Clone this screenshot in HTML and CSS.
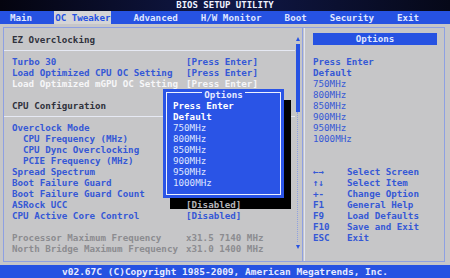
FILE: index.html
```html
<!DOCTYPE html>
<html lang="en">
<head>
    <meta charset="UTF-8">
    <title>BIOS SETUP UTILITY</title>
    <link rel="stylesheet" href="styles.css">
</head>
<body>
    <div class="title-bar">BIOS SETUP UTILITY</div>
    <div class="menu-bar">
        <span class="tab">Main</span>
        <span class="tab active">OC Tweaker</span>
        <span class="tab">Advanced</span>
        <span class="tab">H/W Monitor</span>
        <span class="tab">Boot</span>
        <span class="tab">Security</span>
        <span class="tab">Exit</span>
    </div>

    <div class="main">
        <div class="frame">
            <div class="left">
                <div class="list">
                    <div class="row heading"><span>EZ Overclocking</span></div>
                    <div class="sep"></div>
                    <div class="row"><span>Turbo 30</span><span>[Press Enter]</span></div>
                    <div class="row"><span>Load Optimized CPU OC Setting</span><span>[Press Enter]</span></div>
                    <div class="row selected"><span>Load Optimized mGPU OC Setting</span><span>[Press Enter]</span></div>
                    <div class="row"></div>
                    <div class="row heading"><span>CPU Configuration</span></div>
                    <div class="sep"></div>
                    <!-- values of these rows sit under the options popup -->
                    <div class="row"><span>Overclock Mode</span></div>
                    <div class="row sub"><span>CPU Frequency (MHz)</span></div>
                    <div class="row sub"><span>CPU Dync Overclocking</span></div>
                    <div class="row sub"><span>PCIE Frequency (MHz)</span></div>
                    <div class="row"><span>Spread Spectrum</span></div>
                    <div class="row"><span>Boot Failure Guard</span></div>
                    <div class="row"><span>Boot Failure Guard Count</span></div>
                    <div class="row"><span>ASRock UCC</span><span class="on-shadow">[Disabled]</span></div>
                    <div class="row"><span>CPU Active Core Control</span><span>[Disabled]</span></div>
                    <div class="row"></div>
                    <div class="row info"><span>Processor Maximum Frequency</span><span>x31.5 7140 MHz</span></div>
                    <div class="row info"><span>North Bridge Maximum Frequency</span><span>x31.0 1400 MHz</span></div>
                </div>

                <div class="scrollbar">
                    <div class="arrow up"></div>
                    <div class="thumb"></div>
                    <div class="track"></div>
                    <div class="arrow down"></div>
                </div>

                <div class="popup">
                    <div class="popup-frame">
                        <div class="popup-title"><span>Options</span></div>
                        <div class="opt strong">Press Enter</div>
                        <div class="opt strong">Default</div>
                        <div class="opt">750MHz</div>
                        <div class="opt">800MHz</div>
                        <div class="opt">850MHz</div>
                        <div class="opt">900MHz</div>
                        <div class="opt">950MHz</div>
                        <div class="opt">1000MHz</div>
                    </div>
                </div>
            </div>

            <div class="right">
                <div class="help-title">Options</div>
                <div class="help-list">
                    <div class="strong">Press Enter</div>
                    <div class="strong">Default</div>
                    <div>750MHz</div>
                    <div>800MHz</div>
                    <div>850MHz</div>
                    <div>900MHz</div>
                    <div>950MHz</div>
                    <div>1000MHz</div>
                </div>
                <div class="keys">
                    <span>&larr;&rarr;</span><span>Select Screen</span>
                    <span>&uarr;&darr;</span><span>Select Item</span>
                    <span>+-</span><span>Change Option</span>
                    <span>F1</span><span>General Help</span>
                    <span>F9</span><span>Load Defaults</span>
                    <span>F10</span><span>Save and Exit</span>
                    <span>ESC</span><span>Exit</span>
                </div>
            </div>
        </div>
    </div>

    <div class="footer">v02.67C (C)Copyright 1985-2009, American Megatrends, Inc.</div>
</body>
</html>
```

FILE: styles.css
```css
body {
    margin: 0;
    width: 450px;
    height: 278px;
    overflow: hidden;
    background-color: #c6c6c8;
    font-family: "DejaVu Sans Mono", "Liberation Mono", monospace;
    font-size: 9.2px;
    font-weight: bold;
    line-height: 11px;
    color: #3558d6;
}
.title-bar {
    height: 11px;
    line-height: 11px;
    font-size: 9px;
    text-align: center;
    color: #f0f2ff;
    background: linear-gradient(90deg, #04040f, #101848 50%, #060818);
}
.menu-bar {
    display: flex;
    gap: 21px;
    height: 13px;
    line-height: 13px;
    padding-left: 9px;
    background-color: #2652e2;
    color: #dfe5ff;
}
.tab {
    padding: 0 1px;
}
.tab.active {
    background-color: #d4d4d6;
    color: #2652e2;
}

.main {
    height: 241px;
    box-sizing: border-box;
    padding: 3px 5px 3px 3px;
}
.frame {
    display: flex;
    height: 100%;
    box-sizing: border-box;
    border: 1px solid #8ea0e2;
}
.left {
    position: relative;
    display: flex;
    width: 298px;
    border-right: 1px solid #8ea0e2;
}
.list {
    flex: 1;
    padding: 6px 0 0 8px;
}
.row {
    display: grid;
    grid-template-columns: 174px 1fr;
    height: 11px;
    white-space: nowrap;
}
.row.heading { color: #30323c; }
.row.selected { color: #f6f6f8; }
.row.sub span:first-child { padding-left: 11px; }
.row.info { color: #8c8c90; }
.sep {
    height: 11px;
    margin-left: -8px;
    background: linear-gradient(#e6e9f4, #e6e9f4) center / 100% 1px no-repeat;
}
.on-shadow {
    position: relative;
    z-index: 2;
    color: #b4b4b8;
}

.scrollbar {
    display: flex;
    flex-direction: column;
    align-items: center;
    width: 5px;
    margin-right: 2px;
    padding-top: 6px;
}
.arrow {
    width: 0;
    height: 0;
    border-left: 2.5px solid transparent;
    border-right: 2.5px solid transparent;
}
.arrow.up {
    border-bottom: 4px solid #2652e2;
    margin: 3px 0 3px;
}
.arrow.down {
    border-top: 4px solid #2652e2;
    margin: 3px 0;
}
.thumb {
    width: 4px;
    height: 68px;
    background-color: #2652e2;
}
.track {
    width: 0;
    height: 130px;
    border-left: 1px dotted #8ea0e2;
}

.popup {
    position: absolute;
    left: 159px;
    top: 61px;
    z-index: 1;
    width: 121px;
    height: 109px;
    box-sizing: border-box;
    padding: 3px;
    background-color: #2a54e6;
    box-shadow: 7px 11px 0 #000;
    color: #e4e9ff;
}
.popup-frame {
    height: 100%;
    box-sizing: border-box;
    border: 1px solid #eef1ff;
    padding-left: 6px;
}
.popup-title {
    margin-top: -4px;
    margin-left: -6px;
    text-align: center;
}
.popup-title span {
    padding: 0 2px;
    background-color: #2a54e6;
}
.opt { font-weight: normal; color: #dfe5ff; }
.opt.strong { font-weight: bold; color: #ffffff; }

.right {
    flex: 1;
    margin-left: 1px;
    border-left: 1px solid #e2e5f0;
    padding: 5px 7px 0 8px;
}
.help-title {
    height: 12px;
    line-height: 12px;
    text-align: center;
    background-color: #2652e2;
    color: #dfe5ff;
}
.help-list {
    margin-top: 11px;
    font-weight: normal;
}
.help-list .strong { font-weight: bold; }
.keys {
    display: grid;
    grid-template-columns: 34px 1fr;
    margin-top: 22px;
}

.footer {
    height: 13px;
    line-height: 13px;
    font-size: 9.5px;
    text-align: center;
    background-color: #2652e2;
    color: #e6ebff;
}
```
